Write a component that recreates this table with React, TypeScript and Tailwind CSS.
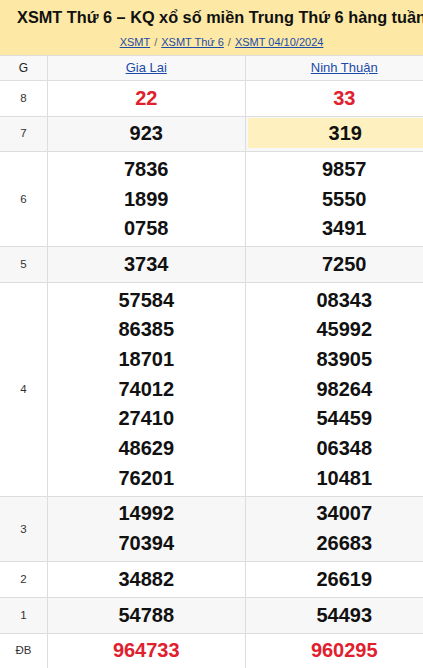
import React from "react";

type Row = { label: string; a: string[]; b: string[]; red?: boolean; gray?: boolean; hl?: boolean };

const rows: Row[] = [
  { label: "8", a: ["22"], b: ["33"], red: true },
  { label: "7", a: ["923"], b: ["319"], gray: true, hl: true },
  { label: "6", a: ["7836", "1899", "0758"], b: ["9857", "5550", "3491"] },
  { label: "5", a: ["3734"], b: ["7250"], gray: true },
  {
    label: "4",
    a: ["57584", "86385", "18701", "74012", "27410", "48629", "76201"],
    b: ["08343", "45992", "83905", "98264", "54459", "06348", "10481"],
  },
  { label: "3", a: ["14992", "70394"], b: ["34007", "26683"], gray: true },
  { label: "2", a: ["34882"], b: ["26619"] },
  { label: "1", a: ["54788"], b: ["54493"], gray: true },
  { label: "ĐB", a: ["964733"], b: ["960295"], red: true },
];

function Nums({ list, red }: { list: string[]; red?: boolean }) {
  return (
    <div className="flex flex-col items-center py-[2.5px]">
      {list.map((n, i) => (
        <div
          key={i}
          className={`h-[29.7px] leading-[29.7px] text-[20px] font-bold ${red ? "text-[#e0202e]" : "text-[#111]"}`}
        >
          {n}
        </div>
      ))}
    </div>
  );
}

export default function App() {
  return (
    <div
      className="w-[423px] h-[668px] overflow-hidden bg-white"
      style={{ fontFamily: '"Liberation Sans", Arial, sans-serif' }}
    >
      <div className="w-[443px]">
        <div className="h-[55px] bg-[#fde9a5] flex flex-col items-center">
          <div className="pt-[6px] h-[28px] leading-[22px] text-[16.3px] font-bold text-[#111] whitespace-nowrap">
            XSMT Thứ 6 – KQ xổ số miền Trung Thứ 6 hàng tuần
          </div>
          <div className="mt-[7px] text-[11px] leading-[14px] text-[#555] whitespace-nowrap">
            <span className="text-[#1a4ba8] underline">XSMT</span>
            <span className="mx-[4px] text-[#666]">/</span>
            <span className="text-[#1a4ba8] underline">XSMT Thứ 6</span>
            <span className="mx-[4px] text-[#666]">/</span>
            <span className="text-[#1a4ba8] underline">XSMT 04/10/2024</span>
          </div>
        </div>
        <div className="border-t border-[#dddddd]">
          <div className="grid grid-cols-[48px_1fr_1fr] h-[25px] bg-[#f8f8f8] border-b border-[#dddddd]">
            <div className="flex items-center justify-center text-[12px] text-[#222] border-r border-[#dddddd]">G</div>
            <div className="flex items-center justify-center text-[13px] text-[#1a4ba8] underline border-r border-[#dddddd]">
              Gia Lai
            </div>
            <div className="flex items-center justify-center text-[13px] text-[#1a4ba8] underline">Ninh Thuận</div>
          </div>
          {rows.map((r) => (
            <div
              key={r.label}
              className={`grid grid-cols-[48px_1fr_1fr] border-b border-[#dddddd] ${r.gray ? "bg-[#f7f7f7]" : "bg-white"}`}
            >
              <div className="flex items-center justify-center text-[11.5px] text-[#333] border-r border-[#dddddd]">
                {r.label}
              </div>
              <div className="border-r border-[#dddddd]">
                <Nums list={r.a} red={r.red} />
              </div>
              <div className={r.hl ? "pl-[2px] pt-[1px] pb-[3.7px]" : ""}>
                {r.hl ? (
                  <div className="bg-[#fff1bf] h-[30px] flex items-center justify-center text-[20px] font-bold text-[#111]">
                    {r.b[0]}
                  </div>
                ) : (
                  <Nums list={r.b} red={r.red} />
                )}
              </div>
            </div>
          ))}
        </div>
      </div>
    </div>
  );
}
